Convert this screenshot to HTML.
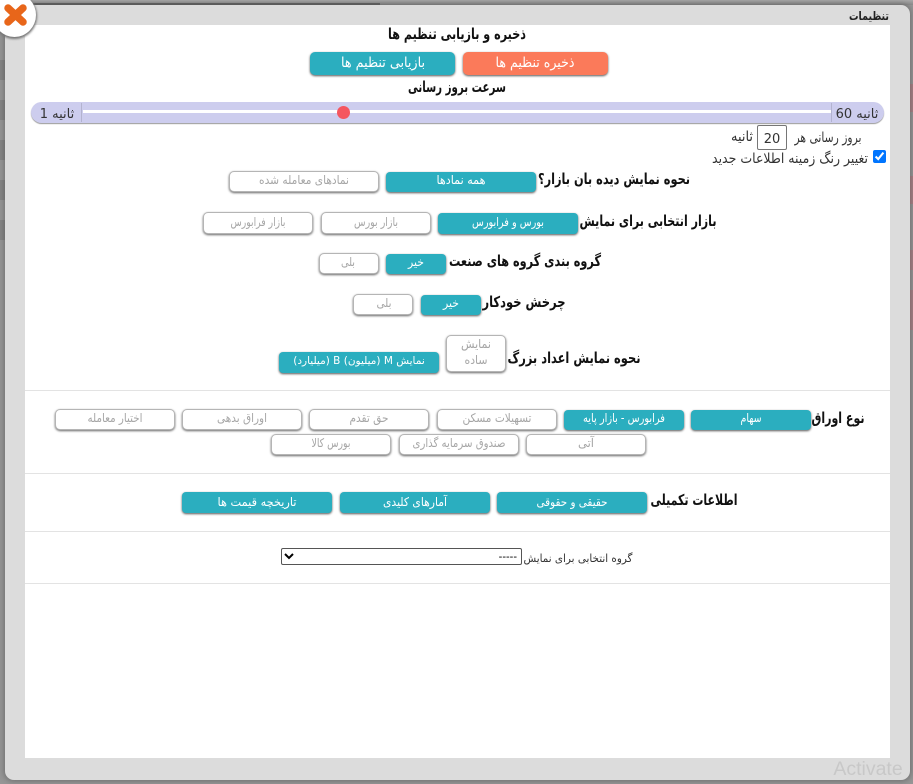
<!DOCTYPE html>
<html lang="fa"><head><meta charset="utf-8"><title>تنظیمات</title>
<style>
html,body{margin:0;padding:0}
body{width:913px;height:784px;position:relative;overflow:hidden;background:#969696;font-family:"DejaVu Sans",sans-serif}
.a{position:absolute;box-sizing:border-box}
.m{left:5px;top:5px;width:905px;height:775px;background:#dcdcdc;border-radius:9px;box-shadow:0 0 6px 1px rgba(50,50,50,.4)}
.c{left:25px;top:25px;width:865px;height:733px;background:#fff}
.on{background:#2baebf;border-radius:4px;box-shadow:0 1px 2px #555}
.off{background:#fff;border:1px solid #b5b5b5;border-radius:5px;box-shadow:0 1px 2px #666}
.hr{left:25px;width:865px;height:1px;background:#e3e3e3}
svg.t{position:absolute;left:0;top:0}
svg.t text{font-family:"DejaVu Sans",sans-serif;direction:rtl;text-anchor:middle}
.k{font-weight:bold;font-size:15px;fill:#111}
.w{font-size:12px;fill:#fff;font-weight:500}
.g{font-size:12px;fill:#a6a6a6}
.n{font-size:14px;fill:#333}
</style></head><body>
<div class="a" style="left:0;top:0;width:913px;height:5px;background:linear-gradient(#a8a8a8,#8a8a8a)"></div>
<div class="a" style="left:20px;top:3px;width:360px;height:2px;background:#666"></div>
<div class="a" style="left:0;top:60px;width:5px;height:20px;background:#858585"></div>
<div class="a" style="left:0;top:100px;width:5px;height:20px;background:#858585"></div>
<div class="a" style="left:0;top:140px;width:5px;height:20px;background:#858585"></div>
<div class="a" style="left:0;top:180px;width:5px;height:20px;background:#858585"></div>
<div class="a" style="left:0;top:220px;width:5px;height:20px;background:#858585"></div>
<div class="a" style="left:910px;top:84px;width:3px;height:28px;background:#a98287"></div>
<div class="a" style="left:910px;top:176px;width:3px;height:28px;background:#a98287"></div>
<div class="a" style="left:910px;top:250px;width:3px;height:20px;background:#a98287"></div>
<div class="a" style="left:910px;top:290px;width:3px;height:40px;background:#a98287"></div>
<div class="a m"></div>
<div class="a c"></div>

<div class="a" style="left:463px;top:52px;width:145px;height:23px;background:#fb7a5a;border-radius:5px;box-shadow:0 1px 2px #555"></div>
<div class="a on" style="left:310px;top:52px;width:145px;height:23px;border-radius:5px"></div>

<div class="a" style="left:31px;top:102px;width:853px;height:21px;background:#cdcdee;border-radius:11px;box-shadow:0 1px 1px #999"></div>
<div class="a" style="left:83px;top:110px;width:748px;height:3px;background:#fff"></div>
<div class="a" style="left:81px;top:103px;width:1px;height:19px;background:#b3b3cf"></div>
<div class="a" style="left:831px;top:103px;width:1px;height:19px;background:#b3b3cf"></div>
<div class="a" style="left:337px;top:106px;width:13px;height:13px;background:#f5565f;border-radius:50%"></div>

<div class="a" style="left:757px;top:125px;width:30px;height:25px;border:1px solid #767676;border-radius:2px;background:#fff"></div>
<input class="a" type="checkbox" checked style="left:873px;top:150px;width:13px;height:13px;margin:0">

<div class="a off" style="left:229px;top:171px;width:150px;height:21px"></div>
<div class="a on" style="left:386px;top:172px;width:150px;height:20px"></div>

<div class="a off" style="left:203px;top:212px;width:110px;height:22px"></div>
<div class="a off" style="left:321px;top:212px;width:110px;height:22px"></div>
<div class="a on" style="left:438px;top:213px;width:140px;height:21px"></div>

<div class="a off" style="left:319px;top:253px;width:60px;height:21px"></div>
<div class="a on" style="left:386px;top:254px;width:60px;height:20px"></div>

<div class="a off" style="left:353px;top:294px;width:60px;height:21px"></div>
<div class="a on" style="left:421px;top:295px;width:60px;height:20px"></div>

<div class="a off" style="left:446px;top:335px;width:60px;height:37px"></div>
<div class="a on" style="left:279px;top:352px;width:160px;height:21px"></div>

<div class="a hr" style="top:390px"></div>
<div class="a on" style="left:691px;top:410px;width:120px;height:20px"></div>
<div class="a on" style="left:564px;top:410px;width:120px;height:20px"></div>
<div class="a off" style="left:437px;top:409px;width:120px;height:21px"></div>
<div class="a off" style="left:309px;top:409px;width:120px;height:21px"></div>
<div class="a off" style="left:182px;top:409px;width:120px;height:21px"></div>
<div class="a off" style="left:55px;top:409px;width:120px;height:21px"></div>
<div class="a off" style="left:526px;top:434px;width:120px;height:21px"></div>
<div class="a off" style="left:399px;top:434px;width:120px;height:21px"></div>
<div class="a off" style="left:271px;top:434px;width:120px;height:21px"></div>

<div class="a hr" style="top:473px"></div>
<div class="a on" style="left:497px;top:492px;width:150px;height:21px"></div>
<div class="a on" style="left:340px;top:492px;width:150px;height:21px"></div>
<div class="a on" style="left:182px;top:492px;width:150px;height:21px"></div>

<div class="a hr" style="top:531px"></div>
<select class="a" style="left:281px;top:548px;width:241px;height:17px;font:11px 'Liberation Sans',sans-serif;direction:rtl;background:#fff;border:1px solid #555;border-radius:2px;padding:0"><option>-----</option></select>
<div class="a hr" style="top:583px"></div>

<svg class="t" width="913" height="784" viewBox="0 0 913 784">
<text x="869" y="20" textLength="40" lengthAdjust="spacingAndGlyphs" style="font-weight:bold;font-size:12px;fill:#222">تنظیمات</text>
<text class="k" x="457" y="39" textLength="138" lengthAdjust="spacingAndGlyphs">ذخیره و بازیابی تنظیم ها</text>
<text class="w" x="535" y="67" textLength="79" lengthAdjust="spacingAndGlyphs" style="font-size:14px">ذخیره تنظیم ها</text>
<text class="w" x="383" y="67" textLength="84" lengthAdjust="spacingAndGlyphs" style="font-size:14px">بازیابی تنظیم ها</text>
<text class="k" x="457" y="92" textLength="98" lengthAdjust="spacingAndGlyphs">سرعت بروز رسانی</text>
<text class="n" x="857" y="118" style="font-size:13px">ثانیه 60</text>
<text class="n" x="57" y="118" style="font-size:13px">ثانیه 1</text>
<text class="n" x="772" y="143" style="font-size:13px;direction:ltr">20</text>
<text class="n" x="828" y="142" textLength="67" lengthAdjust="spacingAndGlyphs">بروز رسانی هر</text>
<text class="n" x="742" y="141" textLength="22" lengthAdjust="spacingAndGlyphs">ثانیه</text>
<text class="n" x="790" y="163" textLength="156" lengthAdjust="spacingAndGlyphs">تغییر رنگ زمینه اطلاعات جدید</text>

<text class="k" x="614" y="184" textLength="152" lengthAdjust="spacingAndGlyphs">نحوه نمایش دیده بان بازار؟</text>
<text class="w" x="461" y="184" textLength="49" lengthAdjust="spacingAndGlyphs">همه نمادها</text>
<text class="g" x="304" y="184" textLength="90" lengthAdjust="spacingAndGlyphs">نمادهای معامله شده</text>

<text class="k" x="648" y="226" textLength="137" lengthAdjust="spacingAndGlyphs">بازار انتخابی برای نمایش</text>
<text class="w" x="508" y="226" textLength="72" lengthAdjust="spacingAndGlyphs">بورس و فرابورس</text>
<text class="g" x="376" y="226" textLength="44" lengthAdjust="spacingAndGlyphs">بازار بورس</text>
<text class="g" x="258" y="226" textLength="55" lengthAdjust="spacingAndGlyphs">بازار فرابورس</text>

<text class="k" x="525" y="266" textLength="152" lengthAdjust="spacingAndGlyphs">گروه بندی گروه های صنعت</text>
<text class="w" x="416" y="266" textLength="16" lengthAdjust="spacingAndGlyphs">خیر</text>
<text class="g" x="348" y="266" textLength="14" lengthAdjust="spacingAndGlyphs">بلی</text>

<text class="k" x="524" y="307" textLength="83" lengthAdjust="spacingAndGlyphs">چرخش خودکار</text>
<text class="w" x="451" y="307" textLength="16" lengthAdjust="spacingAndGlyphs">خیر</text>
<text class="g" x="384" y="307" textLength="15" lengthAdjust="spacingAndGlyphs">بلی</text>

<text class="k" x="574" y="363" textLength="133" lengthAdjust="spacingAndGlyphs">نحوه نمایش اعداد بزرگ</text>
<text class="g" x="476" y="348" textLength="30" lengthAdjust="spacingAndGlyphs">نمایش</text>
<text class="g" x="476" y="364" textLength="23" lengthAdjust="spacingAndGlyphs">ساده</text>
<text class="w" x="359" y="364" style="font-size:10.5px">نمایش M (میلیون) B (میلیارد)</text>

<text class="k" x="838" y="423" textLength="53" lengthAdjust="spacingAndGlyphs">نوع اوراق</text>
<text class="w" x="751" y="422" textLength="21" lengthAdjust="spacingAndGlyphs">سهام</text>
<text class="w" x="624" y="422" textLength="82" lengthAdjust="spacingAndGlyphs">فرابورس - بازار پایه</text>
<text class="g" x="497" y="422" textLength="69" lengthAdjust="spacingAndGlyphs">تسهیلات مسکن</text>
<text class="g" x="369" y="422" textLength="39" lengthAdjust="spacingAndGlyphs">حق تقدم</text>
<text class="g" x="242" y="422" textLength="50" lengthAdjust="spacingAndGlyphs">اوراق بدهی</text>
<text class="g" x="115" y="422" textLength="55" lengthAdjust="spacingAndGlyphs">اختیار معامله</text>
<text class="g" x="586" y="447" textLength="16" lengthAdjust="spacingAndGlyphs">آتی</text>
<text class="g" x="459" y="447" textLength="93" lengthAdjust="spacingAndGlyphs">صندوق سرمایه گذاری</text>
<text class="g" x="331" y="447" textLength="39" lengthAdjust="spacingAndGlyphs">بورس کالا</text>

<text class="k" x="694" y="505" textLength="87" lengthAdjust="spacingAndGlyphs">اطلاعات تکمیلی</text>
<text class="w" x="572" y="506" textLength="71" lengthAdjust="spacingAndGlyphs">حقیقی و حقوقی</text>
<text class="w" x="415" y="506" textLength="64" lengthAdjust="spacingAndGlyphs">آمارهای کلیدی</text>
<text class="w" x="257" y="506" textLength="79" lengthAdjust="spacingAndGlyphs">تاریخچه قیمت ها</text>

<text class="n" x="578" y="562" textLength="109" lengthAdjust="spacingAndGlyphs" style="font-size:11px">گروه انتخابی برای نمایش</text>
<text x="868" y="775" style="direction:ltr;font-family:'Liberation Sans',sans-serif;font-size:19.5px;fill:#c8c8c8">Activate</text>
</svg>

<div class="a" style="left:-7px;top:-7px;width:43px;height:44px;border-radius:50%;background:#fff;box-shadow:0 1px 2px 1px #777"></div>
<svg class="a" style="left:0;top:0" width="32" height="30" viewBox="0 0 32 30"><path d="M8 8 L23 22 M23 8 L8 22" stroke="#e8661a" stroke-width="7.5" stroke-linecap="round" fill="none"/></svg>
</body></html>
